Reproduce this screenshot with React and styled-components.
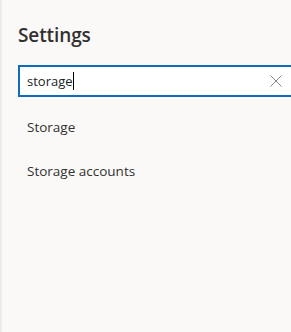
import React from 'react';
import styled, { createGlobalStyle } from 'styled-components';

const GlobalStyle = createGlobalStyle`
  html, body {
    margin: 0;
    padding: 0;
    background: #faf9f8;
  }
  body {
    font-family: "Open Sans", "Noto Sans", sans-serif;
    color: #323130;
  }
`;

const Panel = styled.div`
  width: 291px;
  height: 332px;
  background: #faf9f8;
  border-left: 2px solid #edebe9;
  box-sizing: border-box;
  overflow: hidden;
  padding: 22px 0 0 16px;
`;

const Title = styled.h2`
  margin: 0;
  font-size: 19px;
  font-weight: 600;
  line-height: 26px;
  color: #323130;
  letter-spacing: -0.1px;
`;

const SearchBox = styled.div`
  margin-top: 17px;
  width: 300px;
  height: 32px;
  box-sizing: border-box;
  border: 2px solid #0f6cbd;
  background: #ffffff;
  display: flex;
  align-items: center;
  padding-left: 7px;
  position: relative;
`;

const SearchText = styled.span`
  font-size: 13px;
  color: #201f1e;
  line-height: 20px;
  display: flex;
  align-items: center;
`;

const Caret = styled.span`
  display: inline-block;
  width: 1px;
  height: 18px;
  background: #000;
`;

const ClearButton = styled.span`
  position: absolute;
  left: 250px;
  top: 8px;
  width: 12px;
  height: 12px;
  display: flex;
`;

const ResultList = styled.div`
  display: flex;
  flex-direction: column;
  padding-left: 9px;
  margin-top: 20px;
`;

const ResultItem = styled.div`
  font-size: 13.5px;
  line-height: 20px;
  height: 44px;
  color: #323130;
`;

const results = ['Storage', 'Storage accounts'];

export default function App() {
  return (
    <>
      <GlobalStyle />
      <Panel>
        <Title>Settings</Title>
        <SearchBox>
          <SearchText>
            storage<Caret />
          </SearchText>
          <ClearButton>
            <svg width="12" height="12" viewBox="0 0 12 12">
              <path d="M0.5 0.5 L11.5 11.5 M11.5 0.5 L0.5 11.5" stroke="#8a8886" strokeWidth="1" fill="none" />
            </svg>
          </ClearButton>
        </SearchBox>
        <ResultList>
          {results.map((r) => (
            <ResultItem key={r}>{r}</ResultItem>
          ))}
        </ResultList>
      </Panel>
    </>
  );
}
